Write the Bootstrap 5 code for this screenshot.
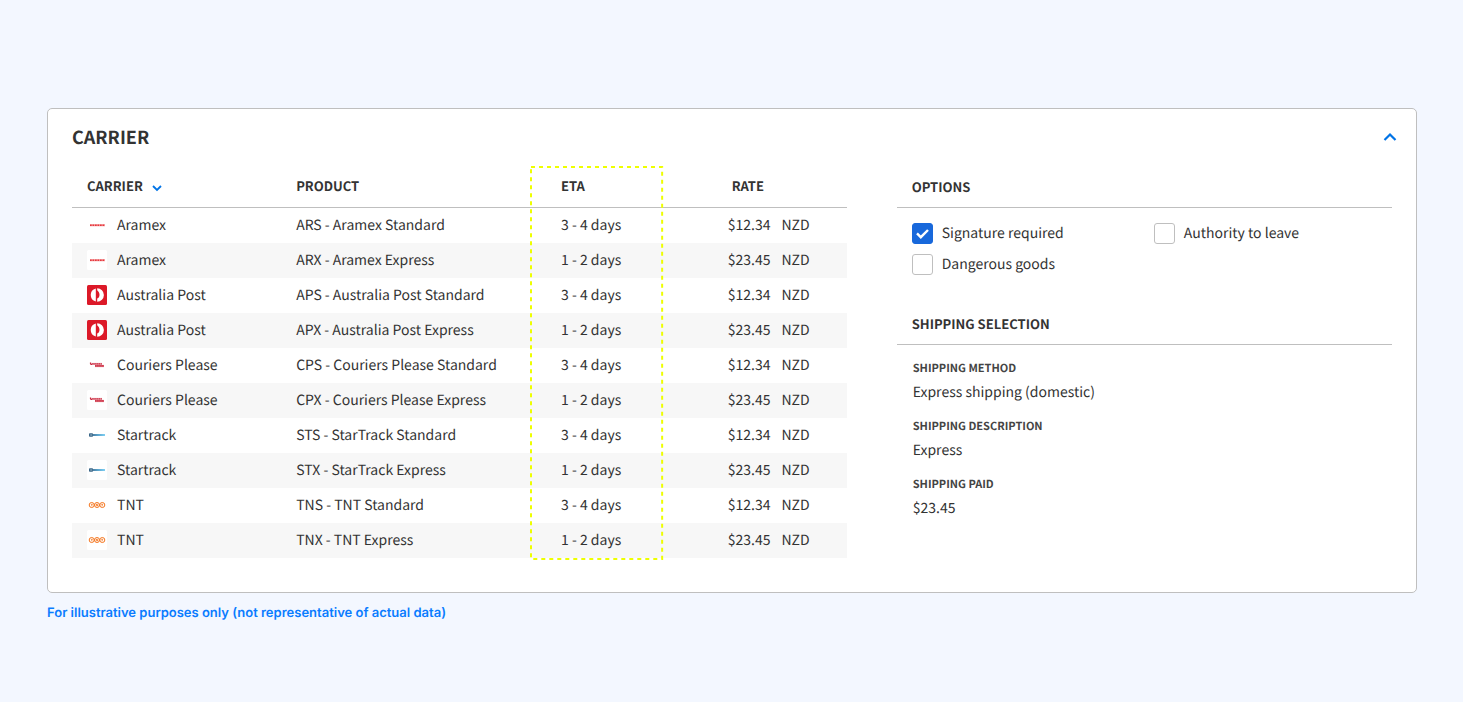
<!DOCTYPE html>
<html lang="en">
<head>
<meta charset="utf-8">
<meta name="viewport" content="width=device-width, initial-scale=1">
<title>Carrier</title>
<link href="https://cdn.jsdelivr.net/npm/bootstrap@5.3.0/dist/css/bootstrap.min.css" rel="stylesheet">
<style>
  body { background: #f3f7ff; color: #333; font-family: "Noto Sans CJK SC", sans-serif; font-size: 14px; line-height: 20px; text-rendering: geometricPrecision; }
  .page { padding: 108px 46px 80px 47px; }
  .panel { background: #fff; border: 1px solid #bfbfbf; border-radius: 5px; padding: 15px 24px 34px; }
  .panel-title { font-size: 18px; line-height: 26px; font-weight: 700; }
  .icon-btn { border: 0; background: none; padding: 0; color: #0073e6; line-height: 0; }
  .panel-toggle { width: 24px; height: 24px; margin-right: -10px; }
  .panel-grid { display: grid; grid-template-columns: 61fr 39fr; gap: 50px; margin-top: 16px; }
  .rates { table-layout: fixed; margin: 0; color: inherit; border-collapse: separate; border-spacing: 0; }
  .rates th, .rates td { border: 0; padding: 0 0 2px; height: 35px; vertical-align: middle; white-space: nowrap; background: none; box-shadow: none; color: inherit; }
  .rates th, .section-head { height: 42px; font-size: 13px; font-weight: 700; border-bottom: 1px solid #bfbfbf; }
  .rates tbody tr:nth-child(even) { background: #f7f7f7; }
  .rates .c-carrier { width: 27%; padding-left: 15px; }
  .rates .c-product { width: 32%; padding-left: 15px; }
  .rates .c-eta { width: 17%; padding-left: 32px; }
  .rates .c-rate { padding-left: 67px; }
  .rates th.c-rate { padding-left: 71px; }
  .amount { margin-right: 11px; }
  .section-head { margin: 0; padding: 0 0 0 15px; line-height: 20px; display: flex; align-items: center; }
  .logo { width: 20px; height: 20px; margin-right: 10px; flex: none; }
  .eta-frame { position: absolute; top: 0; left: 59.1%; width: 17.1%; height: 100%; pointer-events: none; overflow: visible; }
  .options { display: grid; grid-template-columns: 1fr 1fr; gap: 10px 4px; padding: 15px 0 28px 15px; }
  .options .form-check { min-height: 21px; padding: 0; margin: 0; display: flex; align-items: center; gap: 9px; }
  .options .form-check label { line-height: 20px; padding-bottom: 1px; }
  .options .form-check-input { width: 21px; height: 21px; margin: 0; border: 1px solid #bfbfbf; border-radius: 3px; float: none; }
  .options .form-check-input:checked { background-color: #1868db; border-color: #1868db; background-size: 21px 21px;
    background-image: url("data:image/svg+xml,%3Csvg xmlns='http://www.w3.org/2000/svg' viewBox='0 0 21 21'%3E%3Cpath d='M5 10.4l3.8 3.8L16 7' fill='none' stroke='%23fff' stroke-width='2.4'/%3E%3C/svg%3E"); }
  .details { margin: 0; padding: 13px 0 0 16px; }
  .details dt { font-size: 11px; line-height: 20px; font-weight: 700; color: #444; }
  .details dd { line-height: 20px; margin: 4px 0 14px; }
  .footnote { font-family: Inter, sans-serif; font-size: 13px; line-height: 20px; font-weight: 600; color: #0a7cff; margin: 10px 0 0; }
</style>
</head>
<body>
<svg width="0" height="0" class="position-absolute" aria-hidden="true">
  <defs>
    <linearGradient id="track"><stop offset="0" stop-color="#4a7fa3"/><stop offset=".4" stop-color="#5aa3cc"/><stop offset="1" stop-color="#7fd0f3"/></linearGradient>
    <symbol id="aramex" viewBox="0 0 20 20"><rect width="20" height="20" rx="1.5" fill="#fff"/><path d="M3 10.2h15" stroke="#f7a9ab" stroke-width="2.2"/><path d="M3 10.2h15" stroke="#e5383d" stroke-width="1.600" stroke-dasharray="1.700 .8"/></symbol>
    <symbol id="auspost" viewBox="0 0 20 20"><rect width="20" height="20" rx="1.5" fill="#dc1928"/><path d="M8.800 3.500v13a6.700 6.700 0 0 1 0-13z" fill="#fff"/><path d="M10.200 3.300a6.700 6.700 0 0 1 0 13.400v-3.100c1.500-.6 2.300-1.900 2.300-3.800 0-1.800-.9-3.300-2.300-4.500z" fill="#fff"/></symbol>
    <symbol id="couriers" viewBox="0 0 20 20"><rect width="20" height="20" rx="1.5" fill="#fff"/><path d="M3 8.900h12" stroke="#eba3ad" stroke-width="2"/><path d="M3.500 7.500v2h1.500M5.200 8.900h9.600" fill="none" stroke="#c9283f" stroke-width="1.200" stroke-dasharray="1.500 .6"/><path d="M8 11h9" stroke="#e0727f" stroke-width="2.200"/><path d="M8 10.900h9" stroke="#c9283f" stroke-width="1.400" stroke-dasharray="1.600 .5"/></symbol>
    <symbol id="startrack" viewBox="0 0 20 20"><rect width="20" height="20" rx="1.5" fill="#fff"/><rect x="2" y="8.200" width="4" height="3.600" rx=".8" fill="#3b6788"/><path d="M3.200 10h2" stroke="#b9cfdd" stroke-width=".8"/><rect x="6" y="9" width="12" height="2" fill="url(#track)"/></symbol>
    <symbol id="tnt" viewBox="0 0 20 20"><rect width="20" height="20" rx="1.5" fill="#fff"/><g fill="none" stroke="#f5761f" stroke-width="1"><circle cx="4.700" cy="10" r="2.500"/><circle cx="10" cy="10" r="2.500"/><circle cx="15.300" cy="10" r="2.500"/><path d="M3.900 9.300h1.800M4.800 9.300v2M9.300 11.200V8.900l1.400 2.200V8.800M14.300 9.300h1.800M15.200 9.300v2" stroke-width=".8"/></g></symbol>
  </defs>
</svg>
<main class="page">
  <section class="panel">
    <header class="d-flex justify-content-between align-items-center">
      <h1 class="panel-title m-0">CARRIER</h1>
      <button type="button" class="icon-btn panel-toggle" aria-label="Collapse carrier panel"><svg width="24" height="24" viewBox="0 0 24 24" fill="none" stroke="currentColor" stroke-width="2.2"><path d="M6.500 15L12 9.500l5.500 5.500"/></svg></button>
    </header>
    <div class="panel-grid">
      <div class="position-relative align-self-start">
        <table class="table rates">
          <thead>
            <tr>
              <th class="c-carrier" scope="col"><div class="d-flex align-items-center gap-2">CARRIER <button type="button" class="icon-btn pt-1" aria-label="Sort by carrier"><svg width="14" height="14" viewBox="0 0 14 14" fill="none" stroke="currentColor" stroke-width="1.8"><path d="M2 5l4 4 4-4"/></svg></button></div></th>
              <th class="c-product" scope="col">PRODUCT</th>
              <th class="c-eta" scope="col">ETA</th>
              <th class="c-rate" scope="col">RATE</th>
            </tr>
          </thead>
          <tbody>
            <tr><td class="c-carrier"><div class="d-flex align-items-center"><svg class="logo" aria-hidden="true"><use href="#aramex"/></svg>Aramex</div></td><td class="c-product">ARS - Aramex Standard</td><td class="c-eta">3 - 4 days</td><td class="c-rate"><span class="amount">$12.34</span><span class="currency">NZD</span></td></tr>
            <tr><td class="c-carrier"><div class="d-flex align-items-center"><svg class="logo" aria-hidden="true"><use href="#aramex"/></svg>Aramex</div></td><td class="c-product">ARX - Aramex Express</td><td class="c-eta">1 - 2 days</td><td class="c-rate"><span class="amount">$23.45</span><span class="currency">NZD</span></td></tr>
            <tr><td class="c-carrier"><div class="d-flex align-items-center"><svg class="logo" aria-hidden="true"><use href="#auspost"/></svg>Australia Post</div></td><td class="c-product">APS - Australia Post Standard</td><td class="c-eta">3 - 4 days</td><td class="c-rate"><span class="amount">$12.34</span><span class="currency">NZD</span></td></tr>
            <tr><td class="c-carrier"><div class="d-flex align-items-center"><svg class="logo" aria-hidden="true"><use href="#auspost"/></svg>Australia Post</div></td><td class="c-product">APX - Australia Post Express</td><td class="c-eta">1 - 2 days</td><td class="c-rate"><span class="amount">$23.45</span><span class="currency">NZD</span></td></tr>
            <tr><td class="c-carrier"><div class="d-flex align-items-center"><svg class="logo" aria-hidden="true"><use href="#couriers"/></svg>Couriers Please</div></td><td class="c-product">CPS - Couriers Please Standard</td><td class="c-eta">3 - 4 days</td><td class="c-rate"><span class="amount">$12.34</span><span class="currency">NZD</span></td></tr>
            <tr><td class="c-carrier"><div class="d-flex align-items-center"><svg class="logo" aria-hidden="true"><use href="#couriers"/></svg>Couriers Please</div></td><td class="c-product">CPX - Couriers Please Express</td><td class="c-eta">1 - 2 days</td><td class="c-rate"><span class="amount">$23.45</span><span class="currency">NZD</span></td></tr>
            <tr><td class="c-carrier"><div class="d-flex align-items-center"><svg class="logo" aria-hidden="true"><use href="#startrack"/></svg>Startrack</div></td><td class="c-product">STS - StarTrack Standard</td><td class="c-eta">3 - 4 days</td><td class="c-rate"><span class="amount">$12.34</span><span class="currency">NZD</span></td></tr>
            <tr><td class="c-carrier"><div class="d-flex align-items-center"><svg class="logo" aria-hidden="true"><use href="#startrack"/></svg>Startrack</div></td><td class="c-product">STX - StarTrack Express</td><td class="c-eta">1 - 2 days</td><td class="c-rate"><span class="amount">$23.45</span><span class="currency">NZD</span></td></tr>
            <tr><td class="c-carrier"><div class="d-flex align-items-center"><svg class="logo" aria-hidden="true"><use href="#tnt"/></svg>TNT</div></td><td class="c-product">TNS - TNT Standard</td><td class="c-eta">3 - 4 days</td><td class="c-rate"><span class="amount">$12.34</span><span class="currency">NZD</span></td></tr>
            <tr><td class="c-carrier"><div class="d-flex align-items-center"><svg class="logo" aria-hidden="true"><use href="#tnt"/></svg>TNT</div></td><td class="c-product">TNX - TNT Express</td><td class="c-eta">1 - 2 days</td><td class="c-rate"><span class="amount">$23.45</span><span class="currency">NZD</span></td></tr>
          </tbody>
        </table>
        <svg class="eta-frame" aria-hidden="true"><rect x="1" y="1" width="99%" height="100%" fill="none" stroke="#eeff00" stroke-width="2" stroke-dasharray="4 4"/></svg>
      </div>
      <div>
        <h2 class="section-head">OPTIONS</h2>
        <div class="options">
          <div class="form-check"><input class="form-check-input" type="checkbox" id="signature" checked><label for="signature">Signature required</label></div>
          <div class="form-check"><input class="form-check-input" type="checkbox" id="authority"><label for="authority">Authority to leave</label></div>
          <div class="form-check"><input class="form-check-input" type="checkbox" id="dangerous"><label for="dangerous">Dangerous goods</label></div>
        </div>
        <h2 class="section-head">SHIPPING SELECTION</h2>
        <dl class="details">
          <dt>SHIPPING METHOD</dt><dd>Express shipping (domestic)</dd>
          <dt>SHIPPING DESCRIPTION</dt><dd>Express</dd>
          <dt>SHIPPING PAID</dt><dd>$23.45</dd>
        </dl>
      </div>
    </div>
  </section>
  <p class="footnote">For illustrative purposes only (not representative of actual data)</p>
</main>
<script src="https://cdn.jsdelivr.net/npm/bootstrap@5.3.0/dist/js/bootstrap.bundle.min.js"></script>
</body>
</html>
